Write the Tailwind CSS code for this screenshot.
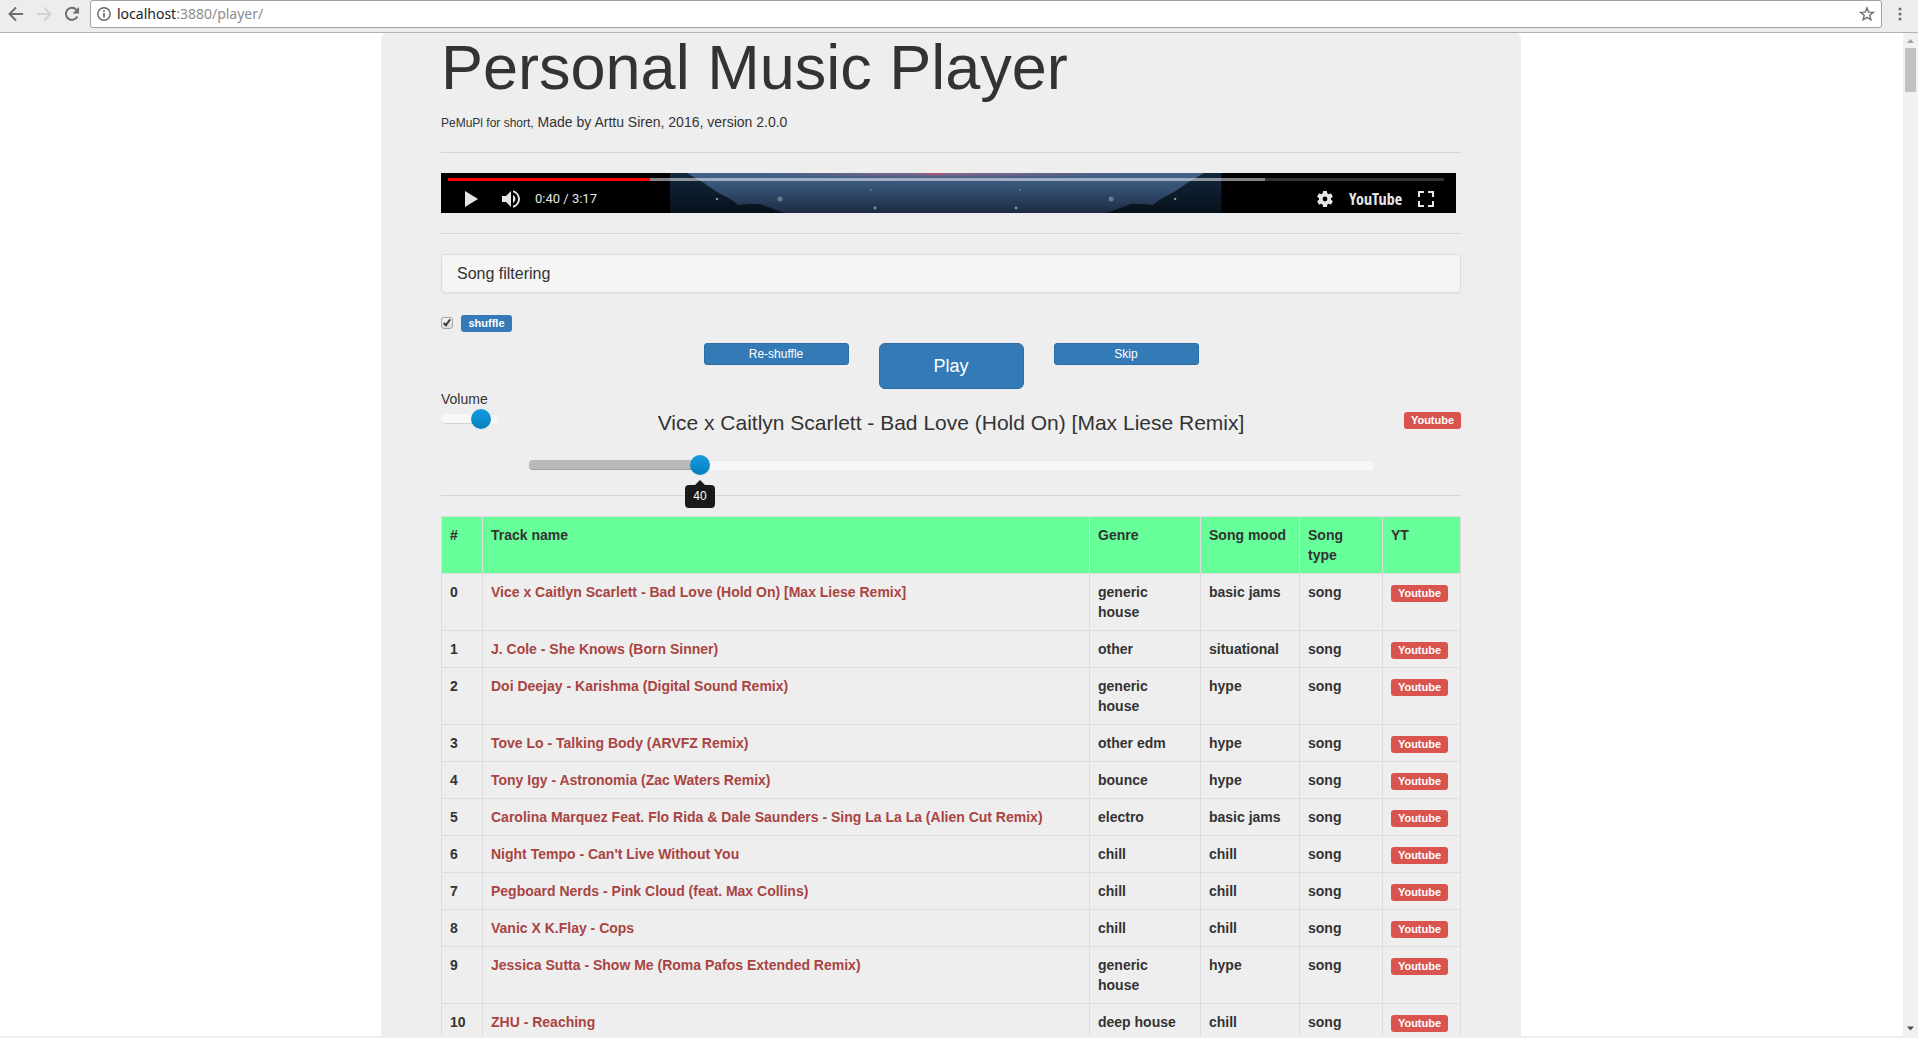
<!DOCTYPE html>
<html lang="en">
<head>
<meta charset="utf-8">
<title>Personal Music Player</title>
<script src="https://cdn.jsdelivr.net/npm/@tailwindcss/browser@4"></script>
</head>
<body class="flex h-screen flex-col overflow-hidden bg-white font-['Liberation_Sans',Arial,sans-serif] text-sm leading-5 text-[#333]">

<!-- Browser toolbar -->
<header class="flex h-[33px] shrink-0 items-start border-b border-[#b2b2b2] bg-[#ededed]">
  <nav class="flex h-7 w-[90px] shrink-0 items-center gap-2 pl-1.5" aria-label="History">
    <button aria-label="Back" class="size-5"><svg viewBox="0 0 20 20" class="size-5" fill="none" stroke="#6b6f6f" stroke-width="2"><path d="M17 10H4M10 3.500L3.500 10L10 16.500"/></svg></button>
    <button aria-label="Forward" class="size-5"><svg viewBox="0 0 20 20" class="size-5" fill="none" stroke="#d2d2d2" stroke-width="2"><path d="M3 10H16M10 3.500L16.500 10L10 16.500"/></svg></button>
    <button aria-label="Reload" class="size-5"><svg viewBox="0 0 20 20" class="size-5"><path d="M15.300 12.500A6 6 0 1 1 14.300 5.700" fill="none" stroke="#6b6f6f" stroke-width="2"/><path d="M17 3V9.500H10.500Z" fill="#6b6f6f"/></svg></button>
  </nav>
  <div class="flex h-7 grow items-center gap-1.5 rounded-[3px] border border-[#a2a2a2] bg-white px-1.5">
    <svg viewBox="0 0 14 14" class="size-3.5 shrink-0"><circle cx="7" cy="7" r="6.200" fill="none" stroke="#666" stroke-width="1.400"/><path d="M6.200 6h1.600v4.500H6.200zM6.200 3.300h1.600v1.600H6.200z" fill="#666"/></svg>
    <a href="#" class="grow font-['Noto_Sans',sans-serif] text-sm text-[#8c8c8c]"><span class="text-[#222]">localhost</span>:3880/player/</a>
    <button aria-label="Bookmark" class="size-4"><svg viewBox="0 0 16 16" class="size-4" fill="none" stroke="#6b6f6f" stroke-width="1.400"><path d="M8 1.900L9.700 6.100L14.300 6.400L10.800 9.300L11.900 13.800L8 11.300L4.100 13.800L5.200 9.300L1.700 6.400L6.300 6.100Z"/></svg></button>
  </div>
  <button aria-label="Menu" class="flex h-7 w-9 shrink-0 items-center justify-center"><svg viewBox="0 0 4 16" class="h-4 w-1" fill="#6b6f6f"><circle cx="2" cy="3" r="1.500"/><circle cx="2" cy="8" r="1.500"/><circle cx="2" cy="13" r="1.500"/></svg></button>
</header>

<div class="flex min-h-0 grow border-b-2 border-[#f0f0f0]">
  <div class="min-w-0 grow overflow-hidden pr-px">
    <main class="mx-auto max-w-[1140px] rounded-md bg-[#eee] px-[60px]">
      <h1 class="text-[63px] leading-[69px]">Personal Music Player</h1>
      <p class="mt-2.5 leading-5"><span class="text-xs">PeMuPl for short,</span> Made by Arttu Siren, 2016, version 2.0.0</p>
      <hr class="my-5 border-[#d5d5d5]">

      <!-- Video strip -->
      <section aria-label="Video" class="relative mr-[5px] h-10 overflow-hidden bg-black text-[#e6e6e6]">
        <svg viewBox="0 0 551 40" preserveAspectRatio="none" class="absolute left-[22.6%] h-10 w-[54.3%]" aria-hidden="true">
          <defs>
            <linearGradient id="sky" x1="0" y1="0" x2="0" y2="1"><stop offset="0" stop-color="#45628a"/><stop offset=".4" stop-color="#345072"/><stop offset="1" stop-color="#1d2b40"/></linearGradient>
            <linearGradient id="hill" x1="0" y1="0" x2="0" y2="1"><stop offset="0" stop-color="#14283c"/><stop offset="1" stop-color="#06101a"/></linearGradient>
            <radialGradient id="glow"><stop offset="0" stop-color="#94688a" stop-opacity=".9"/><stop offset="1" stop-color="#94688a" stop-opacity="0"/></radialGradient>
          </defs>
          <path d="M0 0H551V40H0Z" fill="url(#sky)"/>
          <ellipse cx="275" cy="0" rx="190" ry="5" fill="url(#glow)"/><ellipse cx="265" cy="0" rx="12" ry="2" fill="#c9455f" opacity=".5"/>
          <path d="M0 0H17L34 10L47 19L62 27L68 32L80 31L90 31L101 35L114 40H0Z" fill="url(#hill)"/>
          <path d="M551 0H534L517 10L504 19L489 27L483 32L471 31L461 31L450 35L437 40H551Z" fill="url(#hill)"/>
          <g fill="#7e97a8"><circle cx="110" cy="26" r="2.500" opacity=".7"/><circle cx="441" cy="26" r="2.500" opacity=".7"/><circle cx="47" cy="26" r="1.200"/><circle cx="505" cy="26" r="1.200"/><circle cx="205" cy="35" r="1.400"/><circle cx="346" cy="35" r="1.400"/><circle cx="201" cy="17" r="1" opacity=".6"/><circle cx="350" cy="17" r="1" opacity=".6"/></g>
        </svg>
        <div class="absolute inset-x-0 top-[5px] ml-[7px] mr-3 h-[3px] bg-white/20">
          <div class="h-[3px] bg-white/40" style="width:82%"></div>
          <div class="absolute left-0 top-0 h-[3px] bg-[#f00]" style="width:20.3%"></div>
        </div>
        <div class="absolute inset-x-0 bottom-0 flex h-7 items-center pl-[18px] pr-5">
          <button aria-label="Play video" class="size-6"><svg viewBox="0 0 24 24" class="size-6" fill="#e6e6e6"><path d="M6 4L19 12L6 20Z"/></svg></button>
          <button aria-label="Mute" class="ml-4 size-6"><svg viewBox="0 0 24 24" class="size-6" fill="#e6e6e6"><path d="M3 9v6h4l5 5V4L7 9zM16.500 12A4.500 4.500 0 0 0 14 7.970v8.050A4.500 4.500 0 0 0 16.500 12zM14 3.230v2.060a7 7 0 0 1 0 13.420v2.060a9 9 0 0 0 0-17.540z"/></svg></button>
          <span class="ml-3 font-[Roboto,sans-serif] text-[13px]">0:40 / 3:17</span>
          <button aria-label="Settings" class="ml-auto size-4"><svg viewBox="2 2 20 20" class="size-4" fill="#e6e6e6"><path d="M19.430 12.980c.04-.32.07-.64.07-.98s-.03-.66-.07-.98l2.110-1.650c.19-.15.24-.42.12-.64l-2-3.460c-.12-.22-.39-.3-.61-.22l-2.490 1c-.52-.4-1.080-.73-1.690-.98l-.38-2.650A.488.488 0 0 0 14 2h-4c-.25 0-.46.18-.49.420l-.38 2.650c-.61.25-1.170.59-1.690.98l-2.490-1c-.23-.09-.49 0-.61.22l-2 3.460c-.13.22-.07.49.12.64l2.110 1.650c-.04.32-.07.65-.07.98s.03.66.07.98l-2.110 1.650c-.19.15-.24.42-.12.64l2 3.460c.12.22.39.3.61.22l2.490-1c.52.4 1.080.73 1.690.98l.38 2.650c.03.24.24.42.49.42h4c.25 0 .46-.18.49-.42l.38-2.650c.61-.25 1.170-.59 1.690-.98l2.490 1c.23.09.49 0 .61-.22l2-3.460c.12-.22.07-.49-.12-.64zM12 15a3 3 0 1 1 0-6 3 3 0 0 1 0 6z"/></svg></button>
          <a href="#" class="ml-4 mr-3.5 font-['Open_Sans_Condensed','Roboto_Condensed',Roboto,sans-serif] text-base font-bold">YouTube</a>
          <button aria-label="Full screen" class="size-5"><svg viewBox="0 0 20 20" class="size-5" fill="none" stroke="#e6e6e6" stroke-width="2"><path d="M3 8V3H8M12 3H17V8M17 12V17H12M8 17H3V12"/></svg></button>
        </div>
      </section>

      <hr class="my-5 border-[#d5d5d5]">

      <section class="rounded border border-[#ddd] bg-[#f5f5f5] px-[15px] py-2.5 shadow-xs">
        <h2 class="text-base leading-[17px]">Song filtering</h2>
      </section>

      <div class="mt-5 flex h-5 items-center gap-2">
        <input id="shuffle" type="checkbox" checked class="relative size-3 appearance-none rounded-[3px] border border-[#a5a5a5] bg-linear-to-b from-[#f4f4f4] to-[#dcdcdc] before:absolute before:left-[3px] before:top-0 before:h-2 before:w-1 before:rotate-[38deg] before:border-b-2 before:border-r-2 before:border-[#3c3c3c]">
        <label for="shuffle" class="w-[51px] rounded-[3px] bg-[#337ab7] text-center text-[11px] font-bold leading-[17px] text-white">shuffle</label>
      </div>

      <div class="mt-2.5 flex items-start justify-center gap-[30px]">
        <button class="h-[22px] w-[145px] rounded-[3px] border border-[#2e6da4] bg-[#337ab7] text-xs text-white">Re-shuffle</button>
        <button class="h-[46px] w-[145px] rounded-md border border-[#2e6da4] bg-[#337ab7] text-lg text-white">Play</button>
        <button class="h-[22px] w-[145px] rounded-[3px] border border-[#2e6da4] bg-[#337ab7] text-xs text-white">Skip</button>
      </div>

      <div class="flex justify-between">
        <div class="w-[57px]">
          <label for="volume" class="block leading-5">Volume</label>
          <div class="relative h-5">
            <div class="absolute inset-x-0 top-[5px] h-2.5 rounded bg-linear-to-b from-[#f5f5f5] to-[#f9f9f9] inset-shadow-2xs"></div>
            <div class="absolute left-0 top-[5px] h-2.5 rounded border-b border-[#d4d4d4] bg-[#f7f7f7]" style="width:70%"></div>
            <div class="absolute top-0 size-5 -translate-x-1/2 rounded-full bg-linear-to-b from-[#149bdf] to-[#0480be] shadow-xs" style="left:70%"></div>
            <input id="volume" type="range" min="0" max="100" value="70" class="absolute inset-0 w-full opacity-0">
          </div>
        </div>
        <div class="flex w-[845px] flex-col pt-5">
          <h3 class="text-center text-[21px] leading-7">Vice x Caitlyn Scarlett - Bad Love (Hold On) [Max Liese Remix]</h3>
          <div class="relative mt-[18px] h-5">
            <div class="absolute inset-x-0 top-[5px] h-2.5 rounded bg-linear-to-b from-[#f5f5f5] to-[#f9f9f9] inset-shadow-2xs"></div>
            <div class="absolute left-0 top-[5px] h-2.5 rounded border-b border-[#9d9d9d] bg-[#b9b9b9]" style="width:20.3%"></div>
            <div class="absolute top-0 size-5 -translate-x-1/2 rounded-full bg-linear-to-b from-[#149bdf] to-[#0480be] shadow-xs" style="left:20.3%"></div>
            <input type="range" aria-label="Seek" min="0" max="197" value="40" class="absolute inset-0 w-full opacity-0">
            <div class="absolute top-[25px] z-10 flex -translate-x-1/2 flex-col items-center" style="left:20.3%">
              <svg viewBox="0 0 10 5" class="h-[5px] w-2.5"><path d="M5 0L10 5H0Z" fill="#191919"/></svg>
              <output class="h-[23px] w-[30px] rounded bg-[#191919] text-center text-xs leading-[23px] text-white">40</output>
            </div>
          </div>
        </div>
        <div class="flex w-[57px] justify-end pt-[23px]">
          <a href="#" class="h-[17px] w-[57px] rounded-[3px] bg-[#d9534f] text-center text-[11px] font-bold leading-[17px] text-white">Youtube</a>
        </div>
      </div>

      <hr class="my-5 border-[#d5d5d5]">

      <table class="w-full table-fixed border-collapse font-bold [&_td]:border [&_td]:border-[#ddd] [&_td]:p-2 [&_td]:align-top [&_th]:border [&_th]:border-[#ddd] [&_th]:p-2 [&_th]:text-left [&_th]:align-top">
        <colgroup><col class="w-[41px]"><col><col class="w-[111px]"><col class="w-[99px]"><col class="w-[83px]"><col class="w-[78px]"></colgroup>
        <thead class="bg-[#6f9]"><tr><th scope="col">#</th><th scope="col">Track name</th><th scope="col">Genre</th><th scope="col">Song mood</th><th scope="col">Song type</th><th scope="col">YT</th></tr></thead>
        <tbody id="tracks"></tbody>
      </table>
    </main>
  </div>

  <!-- Scrollbar -->
  <div class="flex w-[15px] shrink-0 flex-col items-center bg-[#f1f1f1]" aria-hidden="true">
    <svg viewBox="0 0 15 15" class="size-[15px]"><path d="M7.500 6L11 10H4Z" fill="#a3a3a3"/></svg>
    <div class="h-11 w-[11px] bg-[#c1c1c1]"></div>
    <svg viewBox="0 0 15 15" class="mt-auto size-[15px]"><path d="M7.500 9.500L11 5.500H4Z" fill="#505050"/></svg>
  </div>
</div>

<script>
const tracks = [
  ["Vice x Caitlyn Scarlett - Bad Love (Hold On) [Max Liese Remix]", "generic house", "basic jams"],
  ["J. Cole - She Knows (Born Sinner)", "other", "situational"],
  ["Doi Deejay - Karishma (Digital Sound Remix)", "generic house", "hype"],
  ["Tove Lo - Talking Body (ARVFZ Remix)", "other edm", "hype"],
  ["Tony Igy - Astronomia (Zac Waters Remix)", "bounce", "hype"],
  ["Carolina Marquez Feat. Flo Rida & Dale Saunders - Sing La La La (Alien Cut Remix)", "electro", "basic jams"],
  ["Night Tempo - Can't Live Without You", "chill", "chill"],
  ["Pegboard Nerds - Pink Cloud (feat. Max Collins)", "chill", "chill"],
  ["Vanic X K.Flay - Cops", "chill", "chill"],
  ["Jessica Sutta - Show Me (Roma Pafos Extended Remix)", "generic house", "hype"],
  ["ZHU - Reaching", "deep house", "chill"],
];
document.getElementById("tracks").innerHTML = tracks.map(([name, genre, mood], i) => `
  <tr>
    <td>${i}</td>
    <td><a href="#" class="text-[#a94442]">${name.replace("&", "&amp;")}</a></td>
    <td>${genre}</td>
    <td>${mood}</td>
    <td>song</td>
    <td><a href="#" class="mt-[3px] block h-[17px] w-[57px] rounded-[3px] bg-[#d9534f] text-center text-[11px] leading-[17px] text-white">Youtube</a></td>
  </tr>`).join("");
</script>
</body>
</html>
